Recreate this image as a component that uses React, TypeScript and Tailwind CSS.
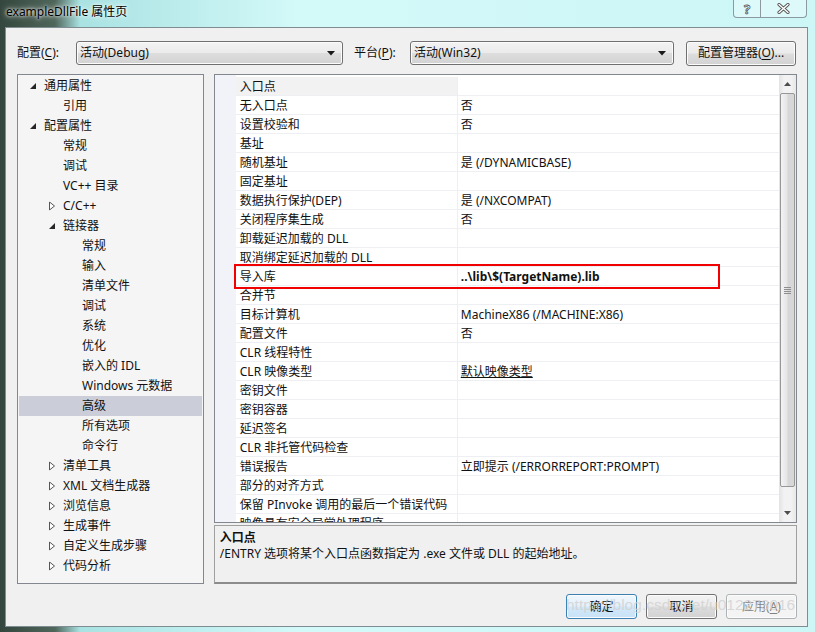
import type { ReactNode } from "react";

const FONT = "font-['Noto_Sans','Noto_Sans_CJK_SC',sans-serif]";

type TreeItem = { label: string; level: number; arrow?: "open" | "closed"; selected?: boolean };

const treeItems: TreeItem[] = [
  { label: "通用属性", level: 0, arrow: "open" },
  { label: "引用", level: 1 },
  { label: "配置属性", level: 0, arrow: "open" },
  { label: "常规", level: 1 },
  { label: "调试", level: 1 },
  { label: "VC++ 目录", level: 1 },
  { label: "C/C++", level: 1, arrow: "closed" },
  { label: "链接器", level: 1, arrow: "open" },
  { label: "常规", level: 2 },
  { label: "输入", level: 2 },
  { label: "清单文件", level: 2 },
  { label: "调试", level: 2 },
  { label: "系统", level: 2 },
  { label: "优化", level: 2 },
  { label: "嵌入的 IDL", level: 2 },
  { label: "Windows 元数据", level: 2 },
  { label: "高级", level: 2, selected: true },
  { label: "所有选项", level: 2 },
  { label: "命令行", level: 2 },
  { label: "清单工具", level: 1, arrow: "closed" },
  { label: "XML 文档生成器", level: 1, arrow: "closed" },
  { label: "浏览信息", level: 1, arrow: "closed" },
  { label: "生成事件", level: 1, arrow: "closed" },
  { label: "自定义生成步骤", level: 1, arrow: "closed" },
  { label: "代码分析", level: 1, arrow: "closed" },
];

type Prop = { name: string; value?: string; bold?: boolean; underline?: boolean };

const props: Prop[] = [
  { name: "入口点" },
  { name: "无入口点", value: "否" },
  { name: "设置校验和", value: "否" },
  { name: "基址" },
  { name: "随机基址", value: "是 (/DYNAMICBASE)" },
  { name: "固定基址" },
  { name: "数据执行保护(DEP)", value: "是 (/NXCOMPAT)" },
  { name: "关闭程序集生成", value: "否" },
  { name: "卸载延迟加载的 DLL" },
  { name: "取消绑定延迟加载的 DLL" },
  { name: "导入库", value: "..\\lib\\$(TargetName).lib", bold: true },
  { name: "合并节" },
  { name: "目标计算机", value: "MachineX86 (/MACHINE:X86)" },
  { name: "配置文件", value: "否" },
  { name: "CLR 线程特性" },
  { name: "CLR 映像类型", value: "默认映像类型", underline: true },
  { name: "密钥文件" },
  { name: "密钥容器" },
  { name: "延迟签名" },
  { name: "CLR 非托管代码检查" },
  { name: "错误报告", value: "立即提示 (/ERRORREPORT:PROMPT)" },
  { name: "部分的对齐方式" },
  { name: "保留 PInvoke 调用的最后一个错误代码" },
  { name: "映像具有安全异常处理程序" },
];

const indent = ["pl-[25px]", "pl-[44px]", "pl-[63px]"];
const arrowPos = ["left-[11px]", "left-[30px]", "left-[49px]"];

const Arrow = ({ kind }: { kind: "open" | "closed" }) =>
  kind === "open" ? (
    <svg width="6" height="6" viewBox="0 0 6 6" className="block">
      <path d="M6 0 L6 6 L0 6 Z" fill="#262626" />
    </svg>
  ) : (
    <svg width="6" height="9" viewBox="0 0 6 9" className="block">
      <path d="M0.5 0.5 L5.5 4.5 L0.5 8.5 Z" fill="#fff" stroke="#555" strokeWidth="1" />
    </svg>
  );

const Mn = ({ children }: { children: ReactNode }) => <span className="underline underline-offset-2">{children}</span>;

const ComboBox = ({ text, w }: { text: string; w: string }) => (
  <div
    className={`${w} h-[24px] flex items-center justify-between pl-[3px] pr-[7px] rounded-[3px] border border-[#707070] bg-[linear-gradient(180deg,#f3f3f3_0%,#ebebeb_48%,#dddddd_52%,#d2d2d2_100%)] shadow-[inset_0_0_0_1px_#fcfcfc]`}
  >
    <span>{text}</span>
    <svg width="8" height="5" viewBox="0 0 8 5">
      <path d="M0 0 L8 0 L4 4.5 Z" fill="#1a1a1a" />
    </svg>
  </div>
);

const Button = ({
  children,
  kind = "normal",
  w = "w-[71px]",
}: {
  children: ReactNode;
  kind?: "normal" | "default" | "disabled";
  w?: string;
}) => {
  const skin =
    kind === "default"
      ? "border-[#3c7fb1] bg-[linear-gradient(180deg,#f0f7fd_0%,#e3f0fb_48%,#d3e8f9_52%,#c8e2f7_100%)]"
      : kind === "disabled"
        ? "border-[#adb2b5] bg-[#f4f4f4] text-[#838383]"
        : "border-[#707070] bg-[linear-gradient(180deg,#f3f3f3_0%,#ebebeb_48%,#dddddd_52%,#d2d2d2_100%)]";
  return (
    <div className={`${w} h-[25px] flex items-center justify-center rounded-[3px] border shadow-[inset_0_0_0_1px_#fcfcfc] ${skin}`}>
      {children}
    </div>
  );
};

export default function App() {
  return (
    <div
      className={`${FONT} relative w-[815px] h-[632px] overflow-hidden text-[12px] leading-[16px] text-[#111] bg-[linear-gradient(90deg,#34463d_0px,#4f665b_55px,#a9e2e2_80px,#d4f9f9_300px,#cdf6f7_815px)]`}
    >
      {/* caption */}
      <div className="h-[27px] flex items-center pl-[6px] pb-[3px] text-[12px] text-black [text-shadow:0_0_6px_#fff,0_0_3px_#fff]">
        exampleDllFile 属性页
      </div>
      <div className="absolute top-0 right-[8px] flex h-[18px] rounded-b-[4px] border border-t-0 border-[#8a9aa0] bg-[#e8fbfb]/60 overflow-hidden">
        <div className="w-[27px] flex items-center justify-center border-r border-[#8a9aa0] text-[13px] font-bold text-white [-webkit-text-stroke:0.8px_#555]">
          ?
        </div>
        <div className="w-[45px] flex items-center justify-center">
          <svg width="13" height="11" viewBox="0 0 13 11">
            <path d="M2 1.5 L11 9.5 M11 1.5 L2 9.5" stroke="#555" strokeWidth="3.2" strokeLinecap="round" />
            <path d="M2 1.5 L11 9.5 M11 1.5 L2 9.5" stroke="#fff" strokeWidth="1.4" strokeLinecap="round" />
          </svg>
        </div>
      </div>

      {/* client */}
      <div className="relative ml-[5px] mr-[7px] h-[600px] border border-[#7f8c91] bg-[#f0f0f0] pt-[13px] pl-[11px] pr-[10px] flex flex-col">
        <div className="flex items-center h-[24px]">
          <div className="w-[59px]">
            配置(<Mn>C</Mn>):
          </div>
          <ComboBox text="活动(Debug)" w="w-[267px]" />
          <div className="w-[56px] ml-[11px]">
            平台(<Mn>P</Mn>):
          </div>
          <ComboBox text="活动(Win32)" w="w-[264px]" />
          <div className="ml-[12px]">
            <Button w="w-[110px]">
              配置管理器(<Mn>O</Mn>)...
            </Button>
          </div>
        </div>

        <div className="flex mt-[9px] gap-[10px]">
          {/* tree */}
          <div className="w-[187px] h-[510px] border border-[#828790] bg-[#f5f5f5] pt-[1px] px-[1px]">
            {treeItems.map((t, i) => (
              <div
                key={i}
                className={`relative h-[20px] flex items-center ${indent[t.level]} ${t.selected ? "bg-[#cbcdd9]" : ""}`}
              >
                {t.arrow && (
                  <span className={`absolute top-1/2 -translate-y-1/2 ${arrowPos[t.level]}`}>
                    <Arrow kind={t.arrow} />
                  </span>
                )}
                {t.label}
              </div>
            ))}
          </div>

          {/* property grid + description */}
          <div className="w-[584px] flex flex-col gap-[2px]">
            <div className="relative h-[449px] border border-[#828790] bg-white flex overflow-hidden">
              <div className="flex-1 flex bg-[#f1f3f8]">
                <div className="w-[21px]" />
                <div className="flex-1 bg-white pt-[2px]">
                  {props.map((p, i) => (
                    <div key={i} className="h-[19px] flex border-b border-[#eeeff2]">
                      <div className={`w-[222px] pl-[4px] pt-[1px] flex items-center border-r border-[#eeeff2] ${i === 0 ? "bg-[#f2f2f2]" : ""}`}>
                        <span className="whitespace-nowrap">{p.name}</span>
                      </div>
                      <div className="flex-1 pl-[3px] pt-[1px] flex items-center">
                        <span className={`whitespace-nowrap ${p.bold ? "font-bold" : ""} ${p.underline ? "underline underline-offset-1" : ""}`}>
                          {p.value}
                        </span>
                      </div>
                    </div>
                  ))}
                </div>
              </div>
              {/* scrollbar */}
              <div className="w-[17px] flex flex-col bg-[linear-gradient(90deg,#e3e3e3,#f2f2f2_30%,#f2f2f2_70%,#e8e8e8)]">
                <div className="h-[18px] flex items-center justify-center">
                  <svg width="7" height="4" viewBox="0 0 7 4">
                    <path d="M0 4 L7 4 L3.5 0 Z" fill="#4d4d4d" />
                  </svg>
                </div>
                <div className="mx-[1px] h-[394px] rounded-[2px] border border-[#979797] bg-[linear-gradient(90deg,#f3f3f3,#e6e6e6_45%,#d6d6d6_55%,#d8d8d8)] flex items-center justify-center">
                  <div className="flex flex-col gap-[1px]">
                    <div className="w-[7px] h-[1px] bg-[#8e8e8e]" />
                    <div className="w-[7px] h-[1px] bg-[#8e8e8e]" />
                    <div className="w-[7px] h-[1px] bg-[#8e8e8e]" />
                    <div className="w-[7px] h-[1px] bg-[#8e8e8e]" />
                  </div>
                </div>
                <div className="flex-1" />
                <div className="h-[18px] flex items-center justify-center">
                  <svg width="7" height="4" viewBox="0 0 7 4">
                    <path d="M0 0 L7 0 L3.5 4 Z" fill="#4d4d4d" />
                  </svg>
                </div>
              </div>
              {/* annotation box */}
              <div className="absolute left-[19px] top-[189px] w-[486px] h-[25px] border-2 border-[#f00000]" />
            </div>

            <div className="h-[59px] border border-[#a0a0a0] border-b-2 border-b-[#8c8c8c] bg-[#f0f0f0] pl-[5px] pt-[4px]">
              <div className="font-bold">入口点</div>
              <div>/ENTRY 选项将某个入口点函数指定为 .exe 文件或 DLL 的起始地址。</div>
            </div>
          </div>
        </div>

        <div className="flex justify-end gap-[9px] mt-[10px]">
          <Button kind="default">确定</Button>
          <Button>取消</Button>
          <Button kind="disabled">
            应用(<Mn>A</Mn>)
          </Button>
        </div>

        <div className="absolute left-[560px] top-[569px] font-['Liberation_Sans',sans-serif] text-[15.5px] text-[#d0d0d0]/80 whitespace-nowrap pointer-events-none">
          https://blog.csdn.net/u012273016
        </div>
      </div>
    </div>
  );
}
